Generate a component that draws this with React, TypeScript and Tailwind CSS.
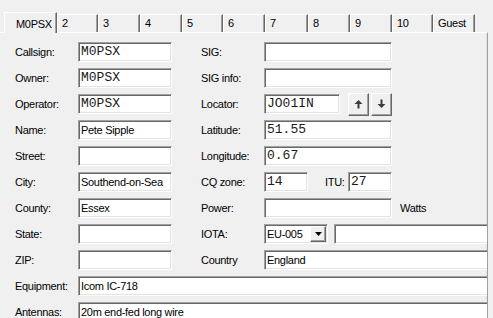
import React from "react";

const sunken =
  "border border-t-[#a0a0a0] border-l-[#a0a0a0] border-b-white border-r-white shadow-[inset_1px_1px_0_#696969,inset_-1px_-1px_0_#e3e3e3] bg-white";
const raised =
  "border border-t-white border-l-white border-b-[#696969] border-r-[#696969] shadow-[inset_-1px_-1px_0_#a0a0a0] bg-[#f0f0f0]";
const mono = "font-['Liberation_Mono',monospace] text-[13px] tracking-normal text-[#1a1a1a]";

interface FieldProps {
  value?: string;
  width: string;
  monoText?: boolean;
}

const Field = ({ value, width, monoText }: FieldProps) => (
  <div
    className={`${sunken} ${width} h-[20px] flex items-center pl-[2px] overflow-hidden whitespace-nowrap shrink-0 ${
      monoText ? mono : ""
    }`}
  >
    {value}
  </div>
);

const LeftLabel = ({ text }: { text: string }) => (
  <div className="w-[78px] pl-[15px] shrink-0">{text}</div>
);

const MidLabel = ({ text }: { text: string }) => (
  <div className="w-[92px] pl-[29px] shrink-0 whitespace-nowrap">{text}</div>
);

const Arrow = ({ up }: { up?: boolean }) => (
  <svg width="9" height="10" viewBox="0 0 9 10">
    <g transform={up ? "" : "rotate(180 4.5 5)"} fill="#3c3c3c">
      <polygon points="4.5,1 8.5,5 0.5,5" />
      <rect x="3.5" y="5" width="2" height="4.5" />
    </g>
  </svg>
);

const tabs = [
  { label: "2", w: "w-[41px]" },
  { label: "3", w: "w-[42px]" },
  { label: "4", w: "w-[42px]" },
  { label: "5", w: "w-[41px]" },
  { label: "6", w: "w-[42px]" },
  { label: "7", w: "w-[43px]" },
  { label: "8", w: "w-[42px]" },
  { label: "9", w: "w-[42px]" },
  { label: "10", w: "w-[41px]" },
  { label: "Guest", w: "w-[42px]" },
];

const left = [
  ["Callsign:", "M0PSX", true],
  ["Owner:", "M0PSX", true],
  ["Operator:", "M0PSX", true],
  ["Name:", "Pete Sipple", false],
  ["Street:", "", false],
  ["City:", "Southend-on-Sea", false],
  ["County:", "Essex", false],
  ["State:", "", false],
  ["ZIP:", "", false],
] as const;

const App = () => {
  const right: React.ReactNode[] = [
    <>
      <MidLabel text="SIG:" />
      <Field width="w-[128px]" />
    </>,
    <>
      <MidLabel text="SIG info:" />
      <Field width="w-[128px]" />
    </>,
    <>
      <MidLabel text="Locator:" />
      <Field width="w-[76px]" value="JO01IN" monoText />
      <div className="flex gap-[2px] ml-[8px]">
        <div className={`${raised} w-[21px] h-[23px] flex items-center justify-center`}>
          <Arrow up />
        </div>
        <div className={`${raised} w-[21px] h-[23px] flex items-center justify-center`}>
          <Arrow />
        </div>
      </div>
    </>,
    <>
      <MidLabel text="Latitude:" />
      <Field width="w-[128px]" value="51.55" monoText />
    </>,
    <>
      <MidLabel text="Longitude:" />
      <Field width="w-[128px]" value="0.67" monoText />
    </>,
    <>
      <MidLabel text="CQ zone:" />
      <Field width="w-[44px]" value="14" monoText />
      <div className="w-[40px] pl-[17px] shrink-0">ITU:</div>
      <Field width="w-[44px]" value="27" monoText />
    </>,
    <>
      <MidLabel text="Power:" />
      <Field width="w-[128px]" />
      <div className="ml-[8px]">Watts</div>
    </>,
    <>
      <MidLabel text="IOTA:" />
      <div className={`${sunken} w-[64px] h-[20px] flex items-center justify-between pl-[2px] pr-[1px] shrink-0`}>
        <span>EU-005</span>
        <div className={`${raised} w-[16px] h-[16px] flex items-center justify-center`}>
          <svg width="7" height="4" viewBox="0 0 7 4">
            <polygon points="0,0 7,0 3.5,4" fill="#000" />
          </svg>
        </div>
      </div>
      <div className="ml-[6px]">
        <Field width="w-[200px]" />
      </div>
    </>,
    <>
      <MidLabel text="Country" />
      <Field width="w-[260px]" value="England" />
    </>,
  ];

  return (
    <div className="w-[493px] h-[318px] bg-[#f0f0f0] overflow-hidden font-['Liberation_Sans',sans-serif] text-[11px] tracking-[-0.3px] text-black">
      <div className="flex items-start pl-[4px] pt-[12px] h-[33px] relative z-10">
        <div className="w-[53px] h-[21px] bg-[#f0f0f0] border-l border-t border-l-white border-t-white border-r border-r-[#696969] shadow-[inset_-1px_0_0_#a0a0a0] pl-[11px] pt-[3px]">
          M0PSX
        </div>
        {tabs.map((t) => (
          <div
            key={t.label}
            className={`${t.w} h-[18px] mt-[2px] border-l border-t border-l-white border-t-white border-r border-r-[#696969] shadow-[inset_-1px_0_0_#a0a0a0] pl-[4px] flex items-center`}
          >
            {t.label}
          </div>
        ))}
      </div>
      <div className="w-[488px] -mt-[1px] border-t border-t-white border-r border-r-[#a0a0a0] shadow-[inset_-1px_0_0_#e3e3e3] pt-[9px] overflow-hidden h-[300px]">
        {left.map(([label, value, isMono], i) => (
          <div key={label} className="flex items-center h-[20px] mb-[6px]">
            <LeftLabel text={label} />
            <Field width="w-[94px]" value={value} monoText={isMono} />
            {right[i]}
          </div>
        ))}
        <div className="flex items-center h-[20px] mb-[6px]">
          <LeftLabel text="Equipment:" />
          <Field width="w-[420px]" value="Icom IC-718" />
        </div>
        <div className="flex items-center h-[20px] mb-[6px]">
          <LeftLabel text="Antennas:" />
          <Field width="w-[420px]" value="20m end-fed long wire" />
        </div>
      </div>
    </div>
  );
};

export default App;
